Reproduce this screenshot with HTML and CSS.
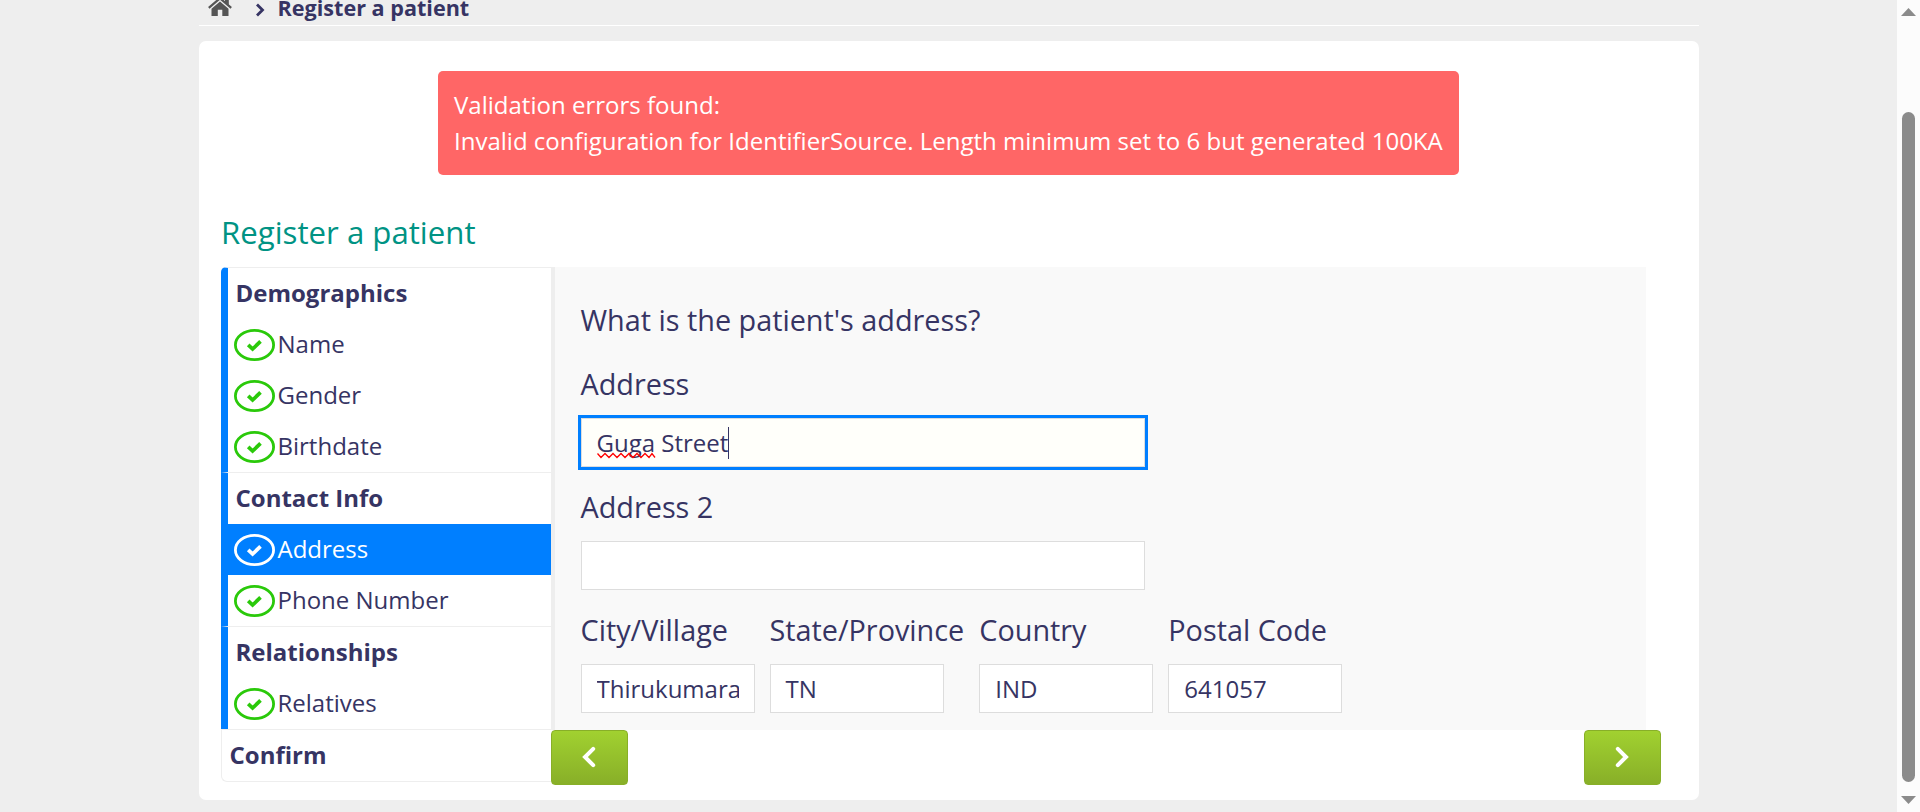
FILE: index.html
```html
<!DOCTYPE html>
<html lang="en">
<head>
<meta charset="utf-8">
<title>Register a patient</title>
<link rel="stylesheet" href="styles.css">
</head>
<body>
<svg class="defs" width="0" height="0" aria-hidden="true">
  <symbol id="check" viewBox="0 0 41 32">
    <ellipse cx="20.5" cy="16" rx="19.1" ry="14.6" fill="none" stroke="currentColor" stroke-width="2.8"/>
    <path d="M14.2 15.8l4.4 4.2 7.9-7.6" fill="none" stroke="currentColor" stroke-width="3.7"/>
  </symbol>
</svg>
<div class="viewport">
  <div class="page">
    <nav class="breadcrumbs">
      <svg class="home" width="24" height="20" viewBox="0 0 24 20">
        <path d="M12 5.500l8.500 7.200V20h-6.200v-6.200H9.800V20H3.500v-7.300z" fill="#555"/>
        <path d="M0.800 11.800L12 2.300l11.200 9.500" fill="none" stroke="#555" stroke-width="2.200"/>
        <path d="M17 0h3.800v9L17 6z" fill="#555"/>
      </svg>
      <svg class="sep" width="10" height="14" viewBox="0 0 10 14"><path d="M2 1.500l5.500 5.500L2 12.500" fill="none" stroke="#363463" stroke-width="2.800"/></svg>
      <span>Register a patient</span>
    </nav>
    <main class="card">
      <div class="error">Validation errors found:<br>Invalid configuration for IdentifierSource. Length minimum set to 6 but generated 100KA</div>
      <h2>Register a patient</h2>
      <div class="wizard">
        <ul class="steps">
          <li class="section first">
            <div class="title">Demographics</div>
            <div class="step"><svg><use href="#check"/></svg>Name</div>
            <div class="step"><svg><use href="#check"/></svg>Gender</div>
            <div class="step"><svg><use href="#check"/></svg>Birthdate</div>
          </li>
          <li class="section">
            <div class="title">Contact Info</div>
            <div class="step active"><svg><use href="#check"/></svg>Address</div>
            <div class="step"><svg><use href="#check"/></svg>Phone Number</div>
          </li>
          <li class="section">
            <div class="title">Relationships</div>
            <div class="step"><svg><use href="#check"/></svg>Relatives</div>
          </li>
          <li class="confirm">Confirm</li>
        </ul>
        <div class="content">
          <form class="panel">
            <h3>What is the patient's address?</h3>
            <div class="field"><label>Address</label><div class="input wide focused"><span class="misspelt">Guga<svg class="squiggle" width="60" height="7" viewBox="0 0 60 7"><path d="M0.500 1.500L4 5.500L8 1.500L12 5.500L16 1.500L20 5.500L24 1.500L28 5.500L32 1.500L36 5.500L40 1.500L44 5.500L48 1.500L52 5.500L55 1.500L58 5.500" fill="none" stroke="#f00" stroke-width="1.300"/></svg></span>&nbsp;Street<span class="caret"></span></div></div>
            <div class="field"><label>Address 2</label><div class="input wide"></div></div>
            <div class="columns">
              <div class="field"><label>City/Village</label><div class="input"><span class="value">Thirukumara</span></div></div>
              <div class="field"><label>State/Province</label><div class="input">TN</div></div>
              <div class="field"><label>Country</label><div class="input">IND</div></div>
              <div class="field"><label>Postal Code</label><div class="input">641057</div></div>
            </div>
          </form>
          <div class="buttons">
            <button type="button" aria-label="Previous"><svg width="14" height="22" viewBox="0 0 14 22"><path d="M11.200 2.800L3 11l8.200 8.200"/></svg></button>
            <button type="button" aria-label="Next"><svg width="14" height="22" viewBox="0 0 14 22"><path d="M2.800 2.800L11 11l-8.200 8.200"/></svg></button>
          </div>
        </div>
      </div>
    </main>
  </div>
  <div class="scrollbar"><i class="up"></i><i class="thumb"></i><i class="down"></i></div>
</div>
</body>
</html>
```
FILE: styles.css
```css
* { box-sizing: border-box; }
body {
  margin: 0;
  background: #eee;
  color: #363463;
  font: 24px/36px "Open Sans", sans-serif;
}
.defs { display: block; height: 0; }
.viewport { display: flex; height: 812px; overflow: hidden; }
.page { flex: 1; }
.breadcrumbs {
  display: flex;
  align-items: flex-start;
  width: 1500px;
  height: 26px;
  margin: 0 auto 15px 199px;
  padding-left: 9px;
  border-bottom: 1px solid #fff;
  font-size: 21.6px;
  font-weight: 700;
  line-height: 32px;
}
.breadcrumbs span { margin: -8px 0 0 13px; }
.home { margin-top: -4px; }
.sep { margin: 3px 0 0 22.500px; }
.card {
  width: 1500px;
  height: 759px;
  margin-left: 199px;
  padding: 30px 22px 0;
  background: #fff;
  border-radius: 7px;
}
.error {
  width: 1021px;
  margin: 0 auto 36px 217px;
  padding: 16px;
  background: #f66;
  border-radius: 5px;
  color: #fff;
  letter-spacing: 0.01px;
  white-space: nowrap;
}
h2 {
  margin: 0 0 14px;
  color: #009384;
  font-size: 31.2px;
  font-weight: 400;
  line-height: 42px;
}
.wizard { display: flex; }
.steps {
  width: 330px;
  margin: 0;
  padding: 0;
  list-style: none;
  line-height: 49px;
}
.section {
  border-top: 1px solid #eee;
  border-left: 7px solid #007fff;
}
.first { border-top-left-radius: 5px; }
.title { height: 51px; padding-left: 7.500px; font-weight: 700; }
.step { display: flex; align-items: center; height: 51px; padding: 0 0 2px 6px; }
.step svg { width: 41px; height: 32px; margin: 2px 2.500px 0 0; color: #2ac90a; }
.active { background: #007fff; color: #fff; }
.active svg { color: #fff; }
.confirm {
  height: 53px;
  padding-left: 7.500px;
  border: 1px solid #eee;
  border-right: 0;
  border-bottom-left-radius: 6px;
  font-weight: 700;
}
.content { width: 1110px; }
.panel {
  width: 1095px;
  height: 463px;
  padding: 35px 0 0 25.5px;
  border-left: 4px solid #eee;
  background: #f9f9f9;
}
h3, label {
  display: block;
  margin: 0;
  font-size: 28.8px;
  font-weight: 400;
  line-height: 36px;
  white-space: nowrap;
}
h3 { margin-bottom: 28px; }
.field { margin-bottom: 22px; }
.input {
  display: flex;
  align-items: center;
  width: 174px;
  height: 49px;
  margin-top: 16px;
  padding: 0 15px;
  background: #fff;
  border: 1px solid #ddd;
}
.wide { width: 564px; }
.focused { background: #fffffa; outline: 3px solid #007fff; }
.value { overflow: hidden; white-space: nowrap; }
.misspelt { position: relative; }
.squiggle { position: absolute; left: 0; top: 27px; }
.caret { width: 1px; height: 32px; background: #363463; }
.columns { display: grid; grid-template-columns: 189px 209.800px 189px 174px; }
.buttons { display: flex; justify-content: space-between; }
button {
  display: flex;
  align-items: center;
  justify-content: center;
  width: 77px;
  height: 55px;
  padding: 0 1px 2px 0;
  background: linear-gradient(#a1d130, #88af28);
  border: 1px solid #88af28;
  border-radius: 4px;
}
button path { fill: none; stroke: #fff; stroke-width: 4; stroke-linecap: round; }
.scrollbar {
  display: flex;
  flex-direction: column;
  align-items: center;
  width: 23px;
  height: 812px;
  padding-top: 8px;
  background: #fcfcfc;
}
.thumb { width: 13px; height: 670px; margin: 96px 0 14px; background: #8b8b8b; border-radius: 7px; }
.up, .down { width: 15px; height: 8px; background: #8b8b8b; }
.up { clip-path: polygon(50% 0, 100% 100%, 0 100%); }
.down { clip-path: polygon(0 0, 100% 0, 50% 100%); }
```
